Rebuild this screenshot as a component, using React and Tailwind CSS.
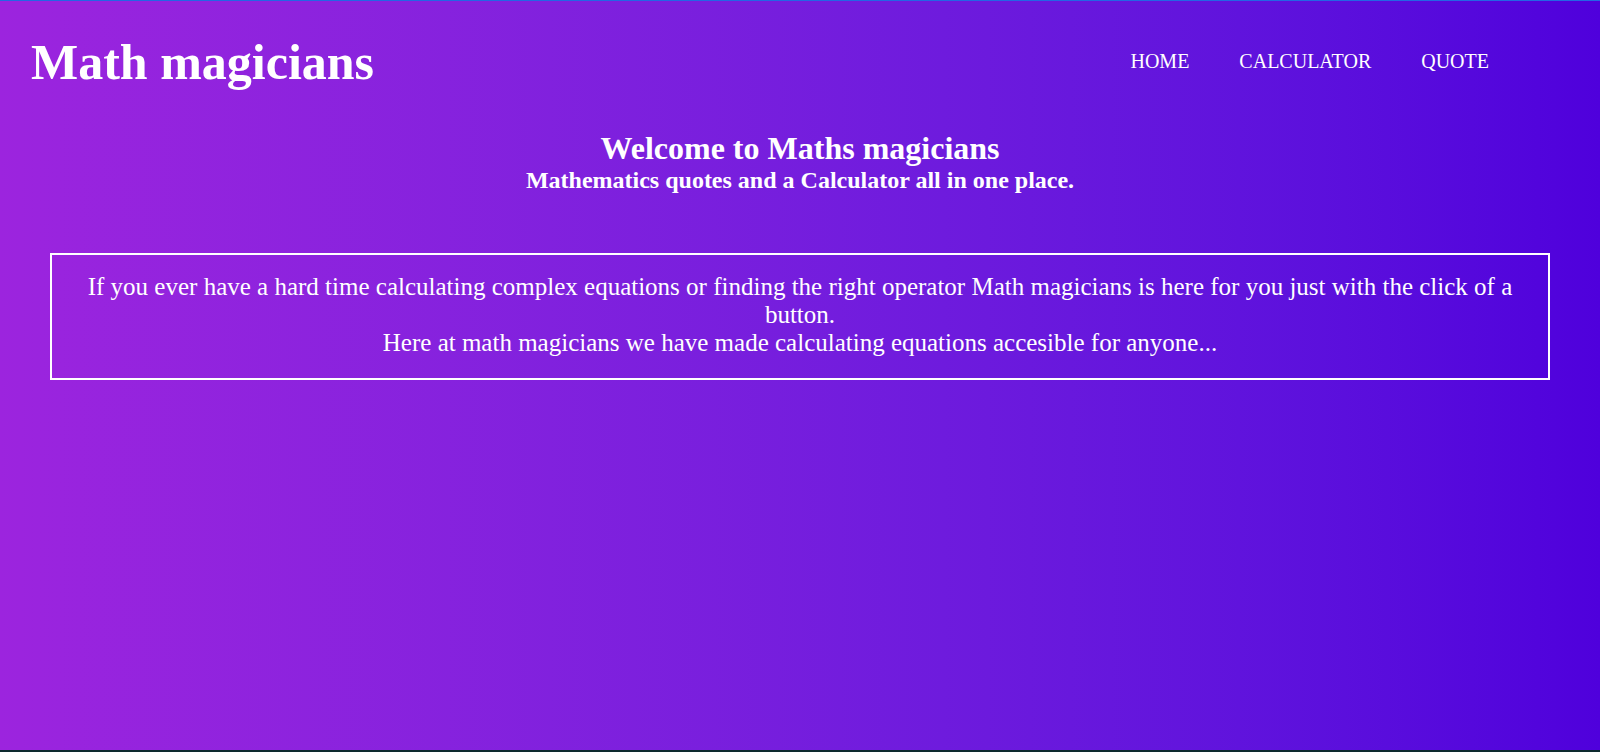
const links = ["HOME", "CALCULATOR", "QUOTE"];

const App = () => {
  return (
    <div className="h-[752px] flex flex-col leading-[normal] border-t border-[#2366e4] border-b-2 border-b-[#0d2a2e] bg-linear-to-r from-[#9c24de] to-[#4f00dc] text-white font-['Liberation_Serif',serif]">
      <header className="flex justify-between items-center pl-[31px] pr-[111px] pt-[32px]">
        <h1 className="text-[50px] font-bold">Math magicians</h1>
        <nav className="pb-[1px]">
          <ul className="flex gap-[50px] text-[20px]">
            {links.map((l) => (
              <li key={l} className="cursor-pointer">{l}</li>
            ))}
          </ul>
        </nav>
      </header>

      <section className="flex flex-col items-center mt-[39px] font-bold">
        <h2 className="text-[32px]">Welcome to Maths magicians</h2>
        <h3 className="text-[24px]">Mathematics quotes and a Calculator all in one place.</h3>
      </section>

      <div className="mx-[50px] mt-[59px] border-2 border-white px-5 pt-[18px] pb-[21px] text-center text-[25px]">
        <p>
          If you ever have a hard time calculating complex equations or finding the right operator Math magicians is here for you just with the click of a button.
        </p>
        <p>Here at math magicians we have made calculating equations accesible for anyone...</p>
      </div>
    </div>
  );
};

export default App;
